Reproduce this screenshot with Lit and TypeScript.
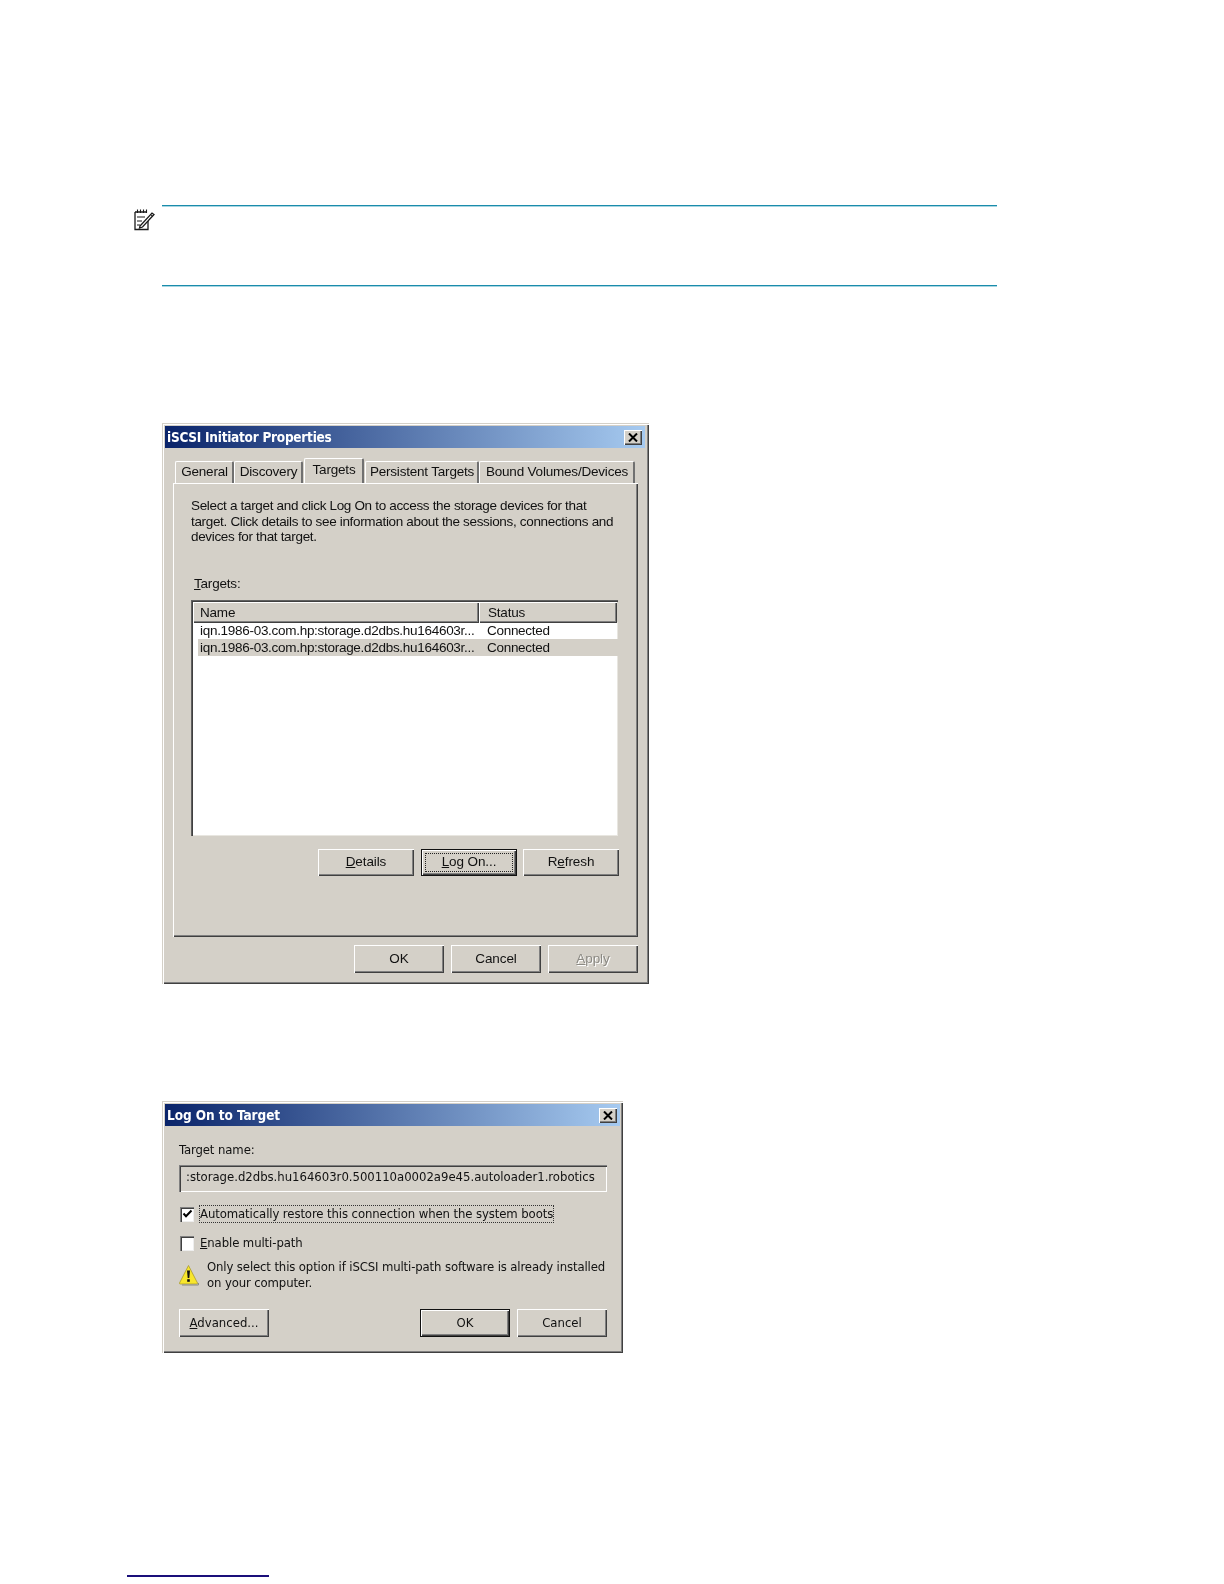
import { LitElement, html, css, svg } from "lit";
import { customElement } from "lit/decorators.js";

const closeBtn = html`<span class="close"><svg width="10" height="9" viewBox="0 0 10 9"><path d="M1 0.5 L9 8.5 M9 0.5 L1 8.5" stroke="#000" stroke-width="2" fill="none"/></svg></span>`;

const noteIcon = svg`<svg width="22" height="23" viewBox="0 0 22 23" fill="none" stroke="#1a1a1a" stroke-width="1.3">
<path d="M2 4 H14 M2 4 V21.5 H15 V11"/>
<path d="M4.5 1.5 V5 M7.5 1.5 V5 M10.5 1.5 V5 M13.5 1.5 V5" stroke-width="1.1"/>
<path d="M4 9 H12 M4 13 H9 M4 17 H7" stroke-width="1.1"/>
<path d="M7 18 L19 5 L21 6.5 L9.5 19 L6.5 20 Z" fill="#fff"/>
<path d="M17.5 6.5 L19.5 8.2" stroke-width="1"/>
</svg>`;

const warnIcon = svg`<svg class="warn-ic" width="20" height="22" viewBox="0 0 20 22">
<path d="M9.5 1.5 L18.5 19 Q18.8 20 17.5 20 H1.5 Q0.2 20 0.5 19 Z" fill="#f8e62c" stroke="#a89a30" stroke-width="0.8"/>
<path d="M8 6.5 H11 L10.3 14 H8.7 Z" fill="#111"/><rect x="8.2" y="15.2" width="2.6" height="2.6" fill="#111"/>
<path d="M19.4 19 V21 H3" stroke="#8a8a80" stroke-width="1" fill="none"/></svg>`;

const checkMark = svg`<svg width="11" height="10" viewBox="0 0 11 10"><path d="M1.5 4.5 L4 7.2 L9.5 1.5" stroke="#000" stroke-width="2" fill="none"/></svg>`;

@customElement("app-root")
export class AppRoot extends LitElement {
  static styles = css`
    :host { display: block; height: 1584px; background: #fff; overflow: hidden; font-family: "Liberation Sans", Arial, sans-serif; color: #111; }
    .page { display: flex; flex-direction: column; align-items: flex-start; padding: 205px 0 0 133px; }
    .note { display: flex; gap: 7px; }
    .note-icon { width: 22px; padding-top: 3px; }
    .note-body { width: 835px; height: 79px; border-top: 1px solid #1a8cab; border-bottom: 1px solid #1a8cab;
      box-shadow: 0 1px 0 #a8d6e2, inset 0 1px 0 #a8d6e2; }
    .dialog { margin-left: 29px; background: #d4d0c8; padding: 3px 4px 3px 3px; box-sizing: border-box; filter: blur(0.35px);
      box-shadow: inset 1px 1px 0 #d4d0c8, inset 2px 2px 0 #fff, inset -1px -1px 0 #404040, inset -2px -2px 0 #808080; }
    .d1 { width: 487px; height: 561px; margin-top: 137px; }
    .d2 { width: 461px; height: 252px; margin-top: 117px; padding-right: 3px; }
    .title { height: 22px; display: flex; align-items: center; justify-content: space-between; padding: 0 3px 0 2px;
      background: linear-gradient(90deg, #0a246a, #a6caf0); color: #fff; font: bold 13.5px "DejaVu Sans Condensed", "DejaVu Sans", sans-serif; }
    .t1 { letter-spacing: -0.25px; }
    .t2 { letter-spacing: -0.06px; }
    .close { width: 18px; height: 15px; background: #d4d0c8; display: flex; align-items: center; justify-content: center;
      box-shadow: inset 1px 1px 0 #fff, inset -1px -1px 0 #404040, inset -2px -2px 0 #808080; }
    .tabs { display: flex; align-items: flex-end; height: 25px; margin: 10px 0 0 10px; position: relative; z-index: 1; }
    .tab { height: 22px; box-sizing: border-box; padding: 2px 0 0 1px; text-align: center; font-size: 13.5px; letter-spacing: -0.2px; background: #d4d0c8;
      border-radius: 2px 2px 0 0; border-left: 1px solid #fff; border-top: 1px solid #fff; border-right: 2px solid #707070; }
    .tab.on { height: 25px; margin: 0 1px; padding-top: 3px; }
    .panel { margin: 0 0 0 8px; width: 465px; height: 454px; box-sizing: border-box; padding: 15px 20px 0 18px;
      box-shadow: inset 1px 1px 0 #fff, inset -1px -1px 0 #404040, inset -2px -2px 0 #808080; }
    .para { font-size: 13.5px; line-height: 15.5px; letter-spacing: -0.33px; white-space: nowrap; }
    .lbl { font-size: 13.5px; line-height: 16px; margin: 31px 0 8px 3px; letter-spacing: -0.2px; }
    .list { height: 236px; background: #fff; box-sizing: border-box; padding: 2px 0 0 2px;
      box-shadow: inset 1px 1px 0 #606060, inset 2px 2px 0 #404040, inset -1px -1px 0 #e8e6e0; }
    .head { height: 20px; display: grid; grid-template-columns: 286px 138px; background: #d4d0c8; font-size: 13.5px; line-height: 21px; letter-spacing: -0.2px; }
    .head div { padding-left: 7px; box-shadow: inset 1px 1px 0 #fff, inset -1px -1px 0 #404040, inset -2px -2px 0 #808080; }
    .head div + div { padding-left: 9px; }
    .row { height: 17px; display: grid; grid-template-columns: 287px 138px; font-size: 13.5px; line-height: 17px; letter-spacing: -0.29px; white-space: nowrap; }
    .row span { padding-left: 7px; }
    .row.sel { background: linear-gradient(90deg, #fff 5px, #d4d0c8 5px); }
    .btns { display: flex; justify-content: flex-end; gap: 7px; margin: 13px -1px 0 0; }
    .btn { width: 96px; height: 27px; box-sizing: border-box; padding-bottom: 2px; display: flex; align-items: center; justify-content: center; font-size: 13.5px; letter-spacing: -0.1px; background: #d4d0c8;
      box-shadow: inset 1px 1px 0 #fff, inset -1px -1px 0 #404040, inset -2px -2px 0 #808080; }
    .btn.def { box-shadow: inset 0 0 0 1px #111, inset 2px 2px 0 #fff, inset -2px -2px 0 #404040, inset -3px -3px 0 #808080; }
    .btn.f { padding-bottom: 0; }
    .btns .btn:last-child { margin-left: -1px; }
    .focus { width: 88px; height: 19px; box-sizing: border-box; padding-bottom: 1px; border: 1px dotted #222; display: flex; align-items: center; justify-content: center; }
    .foot { display: flex; justify-content: flex-end; gap: 7px; margin: 8px 7px 0 0; }
    .foot .btn { width: 90px; height: 28px; }
    .dis { color: #8c8a84; text-shadow: 1px 1px 0 #fff; }
    .body2 { padding: 16px 13px 0 14px; font-family: "DejaVu Sans Condensed", "DejaVu Sans", sans-serif; }
    .body2 .btn { font-size: 13px; letter-spacing: 0; }
    .wide { letter-spacing: -0.1px; font-size: 13px; line-height: 16px; white-space: nowrap; }
    .warn .wide { letter-spacing: -0.13px; }
    .input { height: 27px; margin-top: 7px; box-sizing: border-box; padding: 0 0 4px 7px; display: flex; align-items: center;
      box-shadow: inset 1px 1px 0 #808080, inset 2px 2px 0 #404040, inset -1px -1px 0 #fff; }
    .input.wide { letter-spacing: -0.02px; }
    .chk { display: flex; align-items: center; gap: 6px; padding-left: 1px; }
    .c1 { margin-top: 13px; }
    .c2 { margin-top: 12px; }
    .box { width: 14px; height: 15px; flex: none; background: #fff; display: flex; align-items: center; justify-content: center; box-sizing: border-box;
      box-shadow: inset 1px 1px 0 #808080, inset 2px 2px 0 #404040, inset -1px -1px 0 #eee; }
    .dot { border: 1px dotted #333; margin-left: -1px; }
    .warn { display: flex; gap: 8px; margin-top: 8px; align-items: center; }
    .warn-ic { flex: none; }
    .btns2 { display: flex; margin-top: 18px; }
    .btns2 .btn { width: 90px; height: 28px; }
    .btns2 .gap { flex: 1; }
    .btns2 .sp { margin-left: 7px; }
    .foot-line { width: 142px; border-top: 2px solid #1a0f7a; margin: 222px 0 0 -6px; }
  `;

  render() {
    return html`<div class="page">
      <div class="note"><div class="note-icon">${noteIcon}</div><div class="note-body"></div></div>

      <div class="dialog d1">
        <div class="title"><span class="t1">iSCSI Initiator Properties</span>${closeBtn}</div>
        <div class="tabs">
          <div class="tab" style="width:59px">General</div>
          <div class="tab" style="width:69px">Discovery</div>
          <div class="tab on" style="width:60px">Targets</div>
          <div class="tab" style="width:114px">Persistent Targets</div>
          <div class="tab" style="width:156px">Bound Volumes/Devices</div>
        </div>
        <div class="panel">
          <div class="para">Select a target and click Log On to access the storage devices for that<br>target. Click details to see information about the sessions, connections and<br>devices for that target.</div>
          <div class="lbl"><u>T</u>argets:</div>
          <div class="list">
            <div class="head"><div>Name</div><div>Status</div></div>
            <div class="row"><span>iqn.1986-03.com.hp:storage.d2dbs.hu164603r...</span><span>Connected</span></div>
            <div class="row sel"><span>iqn.1986-03.com.hp:storage.d2dbs.hu164603r...</span><span>Connected</span></div>
          </div>
          <div class="btns">
            <div class="btn"><span><u>D</u>etails</span></div>
            <div class="btn def f"><div class="focus"><span><u>L</u>og On...</span></div></div>
            <div class="btn"><span>R<u>e</u>fresh</span></div>
          </div>
        </div>
        <div class="foot">
          <div class="btn">OK</div><div class="btn">Cancel</div><div class="btn dis"><span><u>A</u>pply</span></div>
        </div>
      </div>

      <div class="dialog d2">
        <div class="title"><span class="t2">Log On to Target</span>${closeBtn}</div>
        <div class="body2">
          <div class="wide">Target name:</div>
          <div class="input wide">:storage.d2dbs.hu164603r0.500110a0002a9e45.autoloader1.robotics</div>
          <div class="chk c1"><span class="box">${checkMark}</span><span class="wide dot">Automatically restore this connection when the system boots</span></div>
          <div class="chk c2"><span class="box"></span><span class="wide"><u>E</u>nable multi-path</span></div>
          <div class="warn">${warnIcon}<div class="wide">Only select this option if iSCSI multi-path software is already installed<br>on your computer.</div></div>
          <div class="btns2">
            <div class="btn"><span><u>A</u>dvanced...</span></div><div class="gap"></div>
            <div class="btn def">OK</div><div class="btn sp">Cancel</div>
          </div>
        </div>
      </div>

      <div class="foot-line"></div>
    </div>`;
  }
}
